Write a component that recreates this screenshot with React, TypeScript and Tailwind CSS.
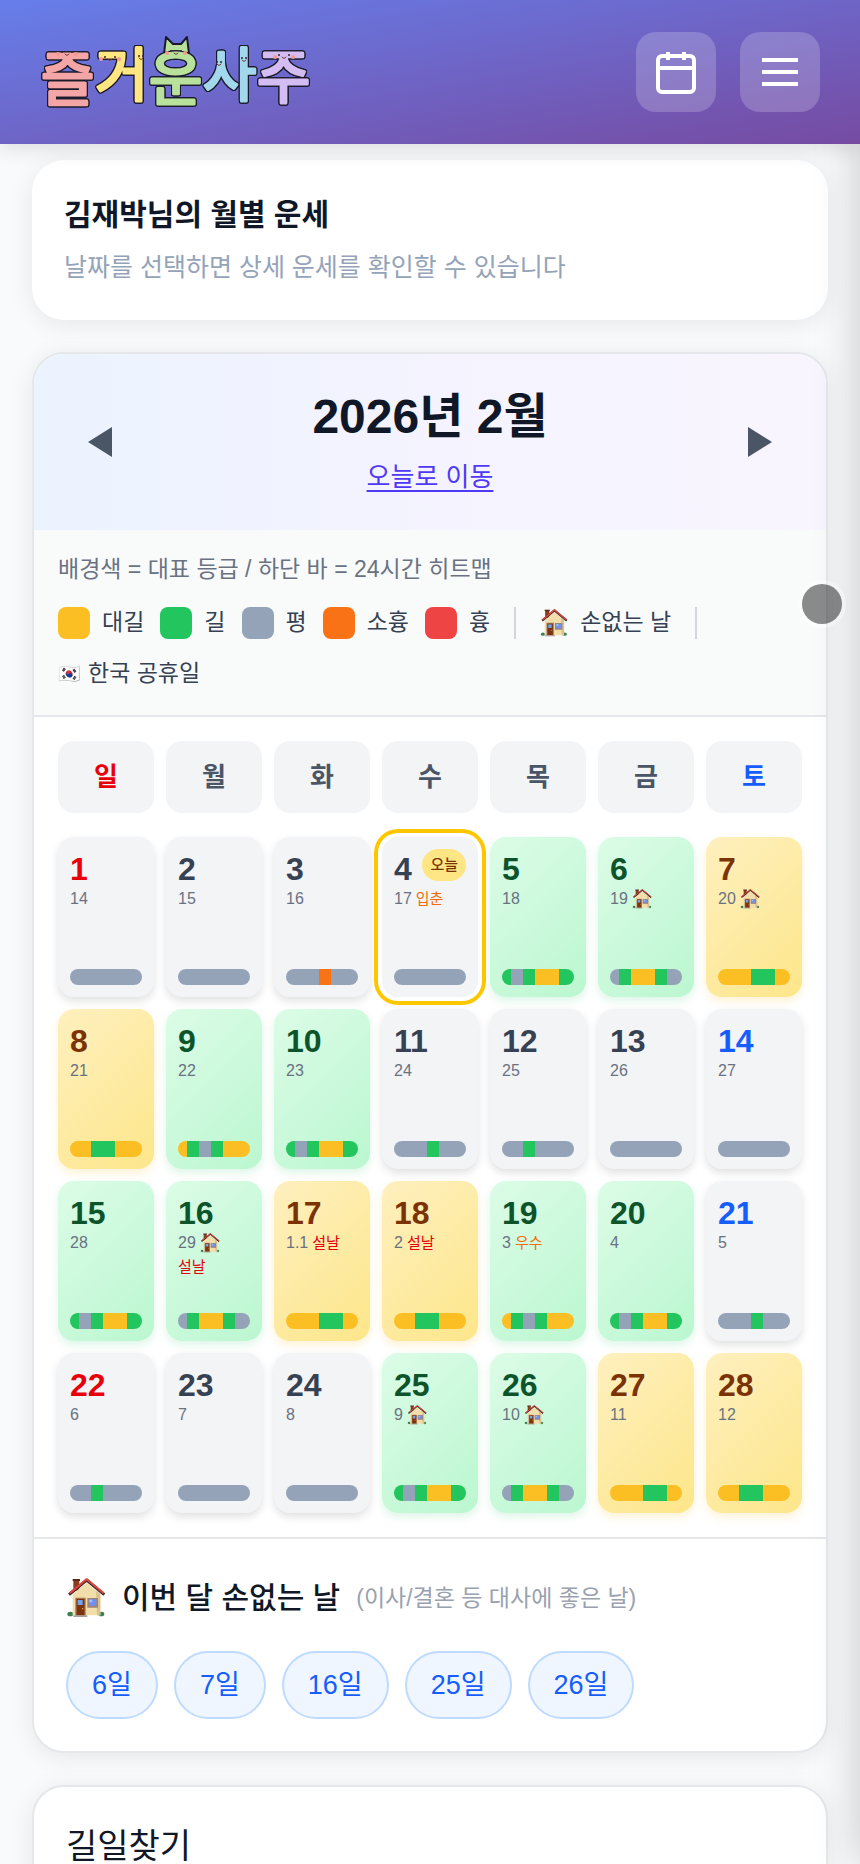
import clsx from "clsx"

type Tone = "plain" | "good" | "best"

interface Day {
  day: number
  lunar: string
  tone?: Tone
  house?: boolean
  holiday?: string
  term?: string
  today?: boolean
  hours?: string
}

// hours: grade letter + number of hours, 24 in total
const days: Day[] = [
  { day: 1, lunar: "14" },
  { day: 2, lunar: "15" },
  { day: 3, lunar: "16", hours: "s11 o4 s9" },
  { day: 4, lunar: "17", term: "입춘", today: true },
  { day: 5, lunar: "18", tone: "good", hours: "g3 s4 g4 y8 g5" },
  { day: 6, lunar: "19", tone: "good", house: true, hours: "s3 g4 y8 g4 s5" },
  { day: 7, lunar: "20", tone: "best", house: true, hours: "y11 g8 y5" },
  { day: 8, lunar: "21", tone: "best", hours: "y7 g8 y9" },
  { day: 9, lunar: "22", tone: "good", hours: "y3 g4 s4 g4 y9" },
  { day: 10, lunar: "23", tone: "good", hours: "g3 s4 g4 y8 g5" },
  { day: 11, lunar: "24", hours: "s11 g4 s9" },
  { day: 12, lunar: "25", hours: "s7 g4 s13" },
  { day: 13, lunar: "26" },
  { day: 14, lunar: "27" },
  { day: 15, lunar: "28", tone: "good", hours: "g3 s4 g4 y8 g5" },
  { day: 16, lunar: "29", tone: "good", house: true, holiday: "설날", hours: "s3 g4 y8 g4 s5" },
  { day: 17, lunar: "1.1", tone: "best", holiday: "설날", hours: "y11 g8 y5" },
  { day: 18, lunar: "2", tone: "best", holiday: "설날", hours: "y7 g8 y9" },
  { day: 19, lunar: "3", tone: "good", term: "우수", hours: "y3 g4 s4 g4 y9" },
  { day: 20, lunar: "4", tone: "good", hours: "g3 s4 g4 y8 g5" },
  { day: 21, lunar: "5", hours: "s11 g4 s9" },
  { day: 22, lunar: "6", hours: "s7 g4 s13" },
  { day: 23, lunar: "7" },
  { day: 24, lunar: "8" },
  { day: 25, lunar: "9", tone: "good", house: true, hours: "g3 s4 g4 y8 g5" },
  { day: 26, lunar: "10", tone: "good", house: true, hours: "s3 g4 y8 g4 s5" },
  { day: 27, lunar: "11", tone: "best", hours: "y11 g8 y5" },
  { day: 28, lunar: "12", tone: "best", hours: "y7 g8 y9" },
]

const weekdays = ["일", "월", "화", "수", "목", "금", "토"]

const grades = [
  { name: "대길", color: "bg-[#fbbf24]" },
  { name: "길", color: "bg-[#22c55e]" },
  { name: "평", color: "bg-[#94a3b8]" },
  { name: "소흉", color: "bg-[#f97316]" },
  { name: "흉", color: "bg-[#ef4444]" },
]

const hourColors: Record<string, string> = {
  y: "bg-[#fbbf24]",
  g: "bg-[#22c55e]",
  s: "bg-[#94a3b8]",
  o: "bg-[#f97316]",
}

const toneStyles: Record<Tone, string> = {
  plain: "bg-gray-100 shadow-[0_4px_8px_rgba(0,0,0,0.12)]",
  good: "bg-[linear-gradient(135deg,#dcfce7,#bbf7d0)] shadow-[0_4px_8px_rgba(34,197,94,0.15)]",
  best: "bg-[linear-gradient(135deg,#fef0bf,#fde68a)] shadow-[0_4px_8px_rgba(251,191,36,0.2)]",
}

function Logo() {
  const letters = [
    { ch: "즐", x: 1, y: 68, color: "#f4a6a6" },
    { ch: "거", x: 55, y: 64, color: "#ffe680" },
    { ch: "운", x: 109, y: 68, color: "#b8e29c" },
    { ch: "사", x: 163, y: 64, color: "#a3d8ec" },
    { ch: "주", x: 217, y: 66, color: "#d4bdf2" },
  ]
  return (
    <svg width="280" height="116" viewBox="0 -18 280 116" role="img" aria-label="즐거운사주">
      <path d="M124 22 L126 5 L133 12 L141 12 L147 5 L149 22Z" fill="#b8e29c" stroke="#1a1a2a" strokeWidth="2" strokeLinejoin="round" />
      <g fontFamily='"Noto Sans CJK KR", sans-serif' fontWeight="400" fontSize="58" strokeLinejoin="round" strokeLinecap="round">
        {letters.map((l) => (
          <text
            key={l.ch}
            x={l.x}
            y={l.y}
            fill={l.color}
            stroke={l.color}
            strokeWidth="3"
            className="[filter:drop-shadow(1px_0_0_#1a1a2a)_drop-shadow(-1px_0_0_#1a1a2a)_drop-shadow(0_1px_0_#1a1a2a)_drop-shadow(0_-1px_0_#1a1a2a)]"
          >
            {l.ch}
          </text>
        ))}
      </g>
      <Face x={27} y={21} />
      <Face x={70} y={26} />
      <Face x={101} y={25} small />
      <Face x={136} y={20} />
      <Face x={179} y={31} small />
      <Face x={204} y={27} small />
      <Face x={244} y={24} />
    </svg>
  )
}

function Face({ x, y, small }: { x: number; y: number; small?: boolean }) {
  const d = small ? 2 : 5
  return (
    <g>
      {!small && <circle cx={x - 9} cy={y + 1} r="2" fill="#f59a8c" />}
      {!small && <circle cx={x + 9} cy={y + 1} r="2" fill="#f59a8c" />}
      <circle cx={x - d} cy={y - 1} r="1" fill="#3a2530" />
      <circle cx={x + d} cy={y - 1} r="1" fill="#3a2530" />
      <path d={`M${x - 2} ${y + 1} q2 3 4 0`} fill="none" stroke="#7a3b2e" strokeWidth="1" strokeLinecap="round" />
    </g>
  )
}

function House({ className }: { className: string }) {
  return (
    <svg className={clsx("shrink-0", className)} viewBox="18 24 120 120" role="img" aria-label="손없는 날">
      <ellipse cx="31" cy="132" rx="9" ry="7" fill="#3f7f55" />
      <ellipse cx="124" cy="132" rx="9" ry="7" fill="#3f7f55" />
      <path d="M40 30h18v32H40z" fill="#8a3d1c" />
      <path d="M38 27h22v6H38z" fill="#5c2a1c" />
      <path d="M38 72 80 38l41 34v64H38z" fill="#f1deaa" />
      <path d="M108 62l13 10v64h-10z" fill="#d9c08c" />
      <path d="M27 74 80 30l53 44" fill="none" stroke="#3a2a30" strokeWidth="9" strokeLinejoin="round" />
      <path d="M29 70 80 28l51 42" fill="none" stroke="#e8453a" strokeWidth="6" strokeLinejoin="round" />
      <path d="M46 83h31v54H46z" fill="#a5714f" />
      <path d="M50 87h23v49H50z" fill="#7a3412" />
      <path d="M53 90h15v15H53z" fill="#6fa3ef" />
      <circle cx="68" cy="116" r="2" fill="#f3c14b" />
      <path d="M82 84h32v29H82z" fill="#a08478" />
      <path d="M87 88h22v19H87z" fill="#6f8ff0" />
      <path d="M88 89h9v8h-9z" fill="#9dc2fa" />
      <path d="M40 136h42v5H40z" fill="#a9a09a" />
    </svg>
  )
}

function HourBar({ hours = "s24" }: { hours?: string }) {
  return (
    <span className="mt-auto flex h-4 overflow-hidden rounded-full">
      {hours.split(" ").map((part, i) => (
        <span key={i} className={hourColors[part[0]]} style={{ width: `${(Number(part.slice(1)) / 24) * 100}%` }} />
      ))}
    </span>
  )
}

function DayCell({ item }: { item: Day }) {
  const tone = item.tone ?? "plain"
  const col = (item.day - 1) % 7
  return (
    <button
      type="button"
      className={clsx(
        "flex h-40 min-w-0 flex-col rounded-2xl p-3 text-left",
        toneStyles[tone],
        item.today && "ring-4 ring-[#fdc700] ring-offset-4",
      )}
    >
      <span className="flex h-[38px] items-start justify-between">
        <span
          className={clsx(
            "text-[32px] leading-10 font-bold",
            tone === "good" && "text-[#0d542b]",
            tone === "best" && "text-[#7b3306]",
            tone === "plain" && col === 0 && "text-[#e7000b]",
            tone === "plain" && col === 6 && "text-[#155dfc]",
            tone === "plain" && col > 0 && col < 6 && "text-[#364153]",
          )}
        >
          {item.day}
        </span>
        {item.today && (
          <span className="rounded-full bg-[#fee685] px-2 text-[15px] leading-8 font-medium text-[#7b3306]">오늘</span>
        )}
      </span>
      <span className="flex flex-wrap items-center gap-x-1 text-[15px] leading-6">
        <span className="text-base leading-6 text-[#6a7282]">{item.lunar}</span>
        {item.house && <House className="size-5" />}
        {item.holiday && <span className="text-[#e7000b]">{item.holiday}</span>}
        {item.term && <span className="text-[#f56a0a]">{item.term}</span>}
      </span>
      <HourBar hours={item.hours} />
    </button>
  )
}

export default function App() {
  const luckyDays = days.filter((d) => d.house)

  return (
    <div className="relative h-screen overflow-hidden bg-[#f8fafc] font-['Liberation_Sans','Noto_Sans_CJK_KR',sans-serif] text-[#101828]">
      <header className="relative z-10 flex h-36 items-center justify-between bg-[linear-gradient(to_bottom_right,#667eea,#764ba2)] px-10 shadow-[0_4px_20px_rgba(0,0,0,0.12)]">
        <Logo />
        <div className="flex gap-6">
          <button type="button" aria-label="달력" className="flex size-20 items-center justify-center rounded-[20px] bg-white/20">
            <svg width="48" height="48" viewBox="0 0 48 48" fill="none" stroke="#fff" strokeWidth="4">
              <rect x="6" y="8" width="36" height="36" rx="4" />
              <path d="M6 20h36M16 4v8M32 4v8" />
            </svg>
          </button>
          <button type="button" aria-label="메뉴" className="flex size-20 items-center justify-center rounded-[20px] bg-white/20">
            <svg width="48" height="48" viewBox="0 0 48 48" fill="none" stroke="#fff" strokeWidth="4">
              <path d="M6 12h36M6 24h36M6 36h36" />
            </svg>
          </button>
        </div>
      </header>

      <main className="flex flex-col gap-8 px-8 pt-4">
        <section className="rounded-[32px] bg-white p-8 shadow-[0_4px_24px_rgba(0,0,0,0.08)]">
          <h1 className="text-[30px] leading-[46px] font-bold">김재박님의 월별 운세</h1>
          <p className="mt-2 text-[25px] leading-[42px] text-[#94a3b8]">날짜를 선택하면 상세 운세를 확인할 수 있습니다</p>
        </section>

        <section className="overflow-hidden rounded-[32px] border-2 border-gray-200 bg-white shadow-[0_4px_24px_rgba(0,0,0,0.08)]">
          <div className="flex items-center justify-between bg-[linear-gradient(to_right,#ebf3ff,#f4f3ff_50%,#f8f5fe)] p-8">
            <button type="button" aria-label="이전 달" className="flex size-[68px] items-center justify-center">
              <svg width="24" height="30" viewBox="0 0 24 30" fill="#4a5565">
                <path d="M24 0v30L0 15z" />
              </svg>
            </button>
            <div className="text-center">
              <h2 className="text-5xl leading-[62px] font-bold">2026년 2월</h2>
              <button type="button" className="mt-2 text-[26px] leading-[42px] text-[#4f39f6] underline underline-offset-4">
                오늘로 이동
              </button>
            </div>
            <button type="button" aria-label="다음 달" className="flex size-[68px] items-center justify-center">
              <svg width="24" height="30" viewBox="0 0 24 30" fill="#4a5565">
                <path d="M0 0v30l24-15z" />
              </svg>
            </button>
          </div>

          <div className="border-b-2 border-gray-200 bg-[#f9fbfb] px-6 pt-5 pb-6 text-[23px]">
            <p className="mb-4 leading-[39px] text-[#6a7282]">배경색 = 대표 등급 / 하단 바 = 24시간 히트맵</p>
            <div className="flex flex-wrap items-center gap-4 leading-[35px] text-[#364153]">
              {grades.map((g) => (
                <span key={g.name} className="flex items-center gap-3">
                  <span className={clsx("size-8 rounded-lg", g.color)} />
                  {g.name}
                </span>
              ))}
              <span className="mx-2 h-8 w-0.5 bg-gray-300" />
              <span className="flex items-center gap-3">
                <House className="size-7" />
                손없는 날
              </span>
              <span className="mx-2 h-8 w-0.5 bg-gray-300" />
              <span className="flex items-center gap-2">
                <span className="text-lg">🇰🇷</span>
                한국 공휴일
              </span>
            </div>
          </div>

          <div className="p-6">
            <div className="mb-6 grid grid-cols-7 gap-3">
              {weekdays.map((w, i) => (
                <div
                  key={w}
                  className={clsx(
                    "rounded-2xl bg-gray-100 py-4 text-center text-[26px] leading-10 font-bold",
                    i === 0 ? "text-[#e7000b]" : i === 6 ? "text-[#155dfc]" : "text-[#4a5565]",
                  )}
                >
                  {w}
                </div>
              ))}
            </div>
            <div className="grid grid-cols-7 gap-3">
              {days.map((d) => (
                <DayCell key={d.day} item={d} />
              ))}
            </div>
          </div>

          <div className="border-t-2 border-gray-200 p-8">
            <div className="mb-[26px] flex items-center gap-4 leading-[54px]">
              <House className="size-10" />
              <h3 className="text-[30px] font-medium">이번 달 손없는 날</h3>
              <span className="text-[23px] text-[#99a1af]">(이사/결혼 등 대사에 좋은 날)</span>
            </div>
            <div className="flex flex-wrap gap-4">
              {luckyDays.map((d) => (
                <button
                  key={d.day}
                  type="button"
                  className="rounded-full border-2 border-[#bedbff] bg-[#eff6ff] px-6 text-[27px] leading-[64px] text-[#155dfc]"
                >
                  {d.day}일
                </button>
              ))}
            </div>
          </div>
        </section>

        <section className="rounded-[32px] border-2 border-gray-200 bg-white p-8 shadow-[0_4px_24px_rgba(0,0,0,0.08)]">
          <h2 className="text-[34px] leading-[54px]">길일찾기</h2>
        </section>
      </main>

      {/* closed drawer, only its shadow reaches the page */}
      <aside aria-hidden="true" className="pointer-events-none fixed top-0 left-full h-full w-80 shadow-[-4px_0_40px_rgba(0,0,0,0.18)]" />

      <button type="button" aria-label="빠른 이동" className="fixed top-[584px] right-[18px] size-10 rounded-full bg-black/45 ring-4 ring-white/30" />
    </div>
  )
}
